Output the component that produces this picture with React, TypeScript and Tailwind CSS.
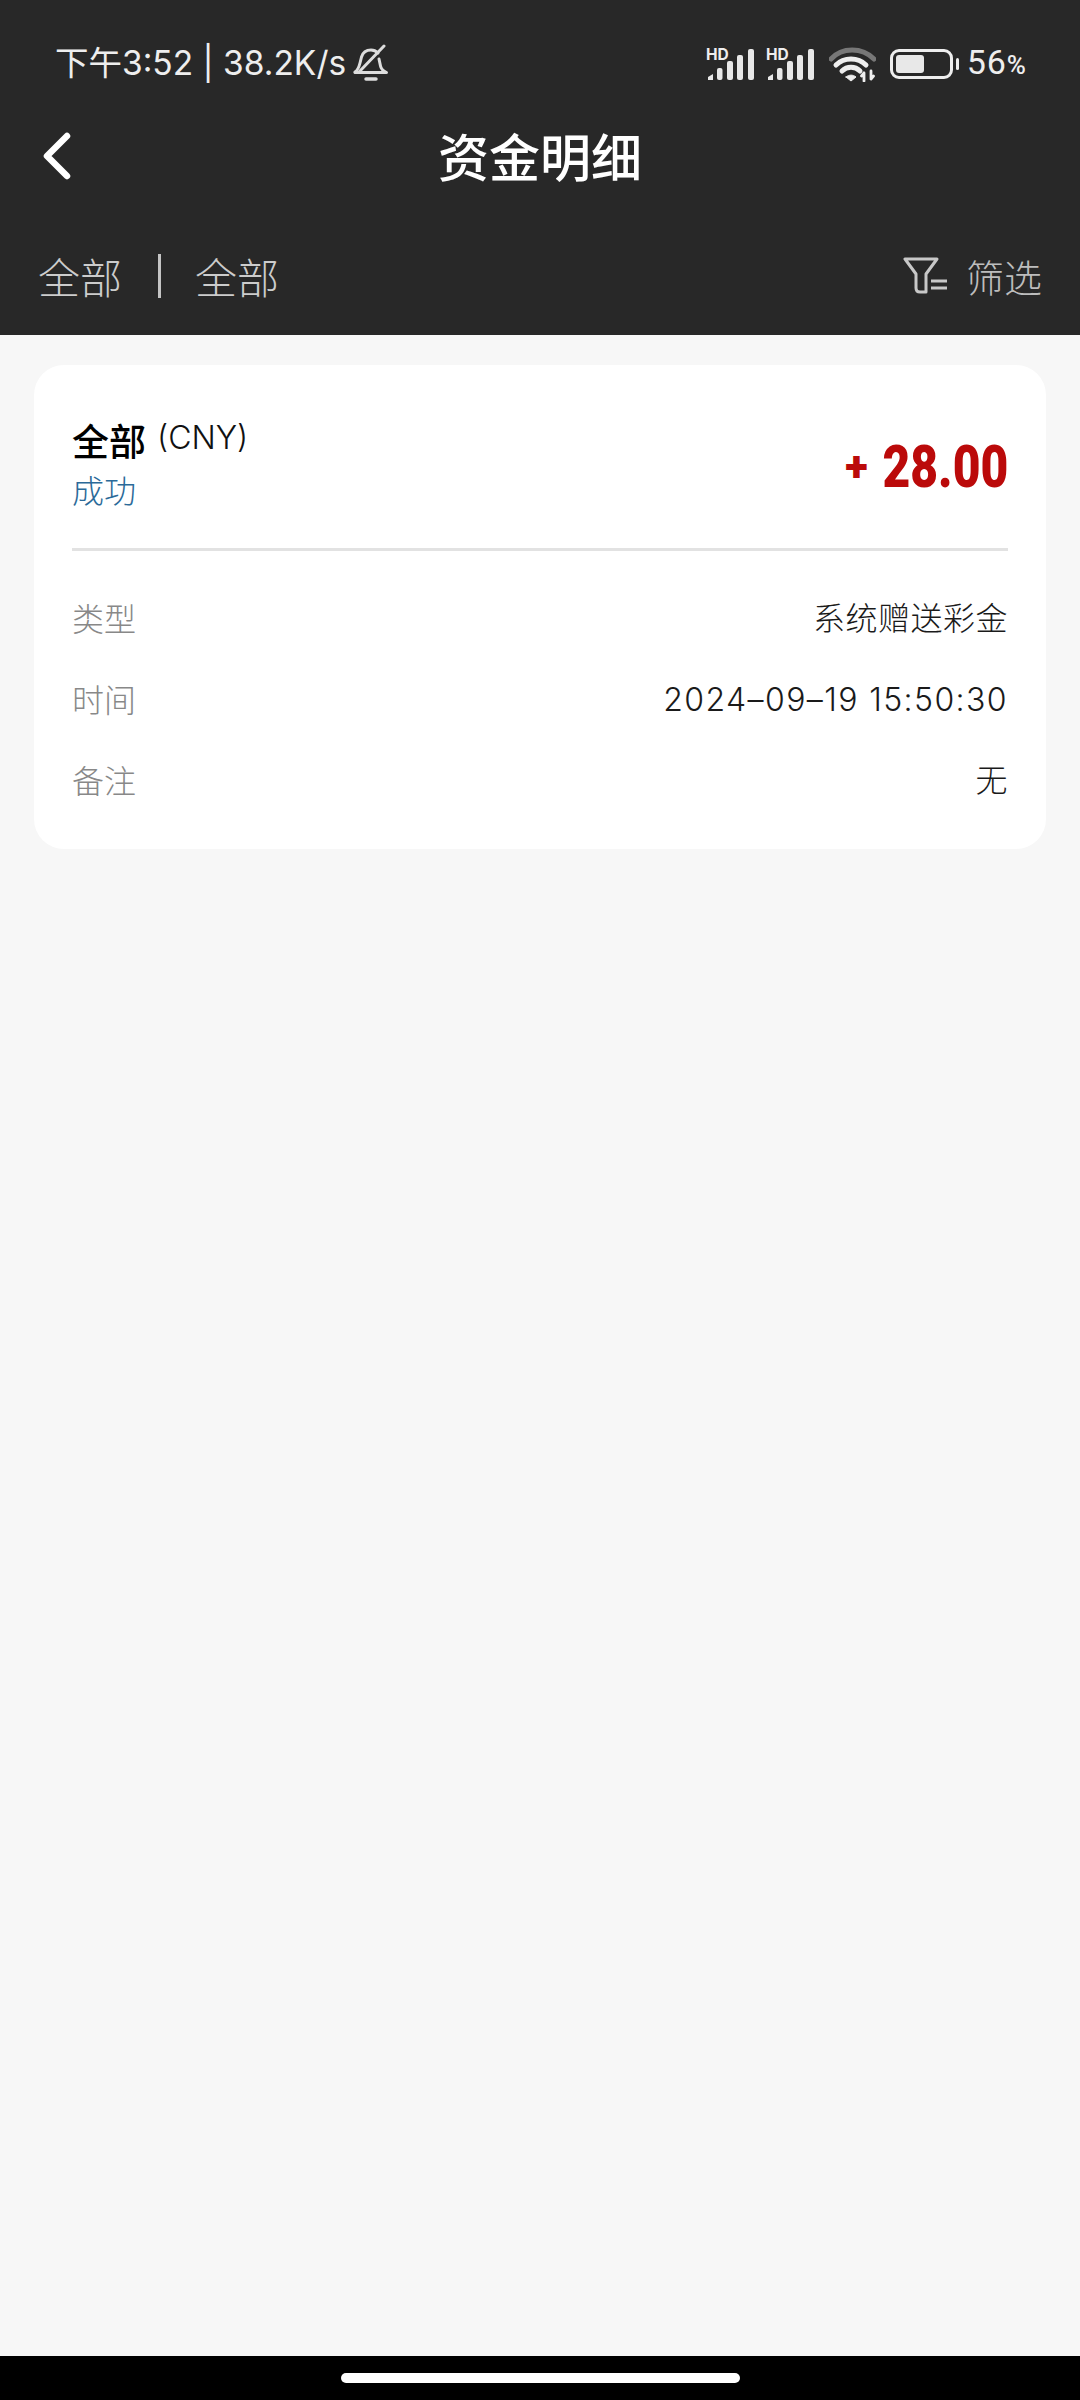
const cjk = "font-['Noto_Sans_CJK_SC','Noto_Sans',sans-serif]";

function Signal() {
    return (
        <svg width="50" height="36" viewBox="0 0 50 36">
            <text x="0" y="13.5" fontSize="15.5" fontWeight="700" fill="#eeeeee" fontFamily="Inter, sans-serif">
                HD
            </text>
            <path d="M2 34v-3l5-3v6z" fill="#e8e8e8" />
            <rect x="11" y="22" width="5.500" height="12" rx="2" fill="#e8e8e8" />
            <rect x="21" y="15" width="6" height="19" rx="2" fill="#e8e8e8" />
            <rect x="31" y="9" width="6" height="25" rx="2" fill="#e8e8e8" />
            <rect x="42" y="3" width="6" height="31" rx="2" fill="#e8e8e8" />
        </svg>
    );
}

function Wifi() {
    return (
        <svg width="47" height="36" viewBox="0 0 47 36" fill="none" strokeLinecap="round">
            <path d="M2 13C13 1 33 1 45 13" stroke="#777777" strokeWidth="5" />
            <path d="M7 19C15 11 29 11 37 19" stroke="#eeeeee" strokeWidth="5" />
            <path d="M13 25C18 20 26 20 31 25" stroke="#eeeeee" strokeWidth="5" />
            <path d="M17 31L22 35L27 31C24 28.500 20 28.500 17 31Z" fill="#eeeeee" stroke="#eeeeee" strokeWidth="1" />
            <path d="M35 27V35M35 27l-2.500 3M42 25V33M42 33l2.500-3" stroke="#eeeeee" strokeWidth="2.800" />
        </svg>
    );
}

function MutedBell() {
    return (
        <svg width="37" height="38" viewBox="0 0 37 38" fill="none" stroke="#dddddd" strokeWidth="3" strokeLinejoin="round" strokeLinecap="round">
            <path d="M3 28c3-2 4-5 5-9l1.500-6C11 8 15 6 19 6c3 0 5 1 7 3" />
            <path d="M27 15l1.500 7c.5 3 3 5 6 6.500H3" />
            <path d="M32 2L7 28" />
            <path d="M14 35h10" strokeWidth="3.500" />
        </svg>
    );
}

function Battery() {
    return (
        <div className="flex items-center gap-[3px]">
            <div className="h-[30px] w-[63px] rounded-[9px] border-[3px] border-[#eeeeee] p-[3px]">
                <div className="h-full w-[28px] rounded-[3px] bg-[#e8e8e8]" />
            </div>
            <div className="h-[12px] w-[3px] rounded-full bg-[#eeeeee]" />
        </div>
    );
}

function StatusBar() {
    return (
        <div className="flex h-[84px] items-end justify-between pb-[1px] pl-[55px] pr-[54px]">
            <div className="flex items-center gap-[6px] font-['Inter','Noto_Sans_CJK_SC',sans-serif] text-[33.5px] leading-[40px] text-[#eeeeee]">
                <span>下午3:52 | 38.2K/s</span>
                <MutedBell />
            </div>
            <div className="mb-[-2px] flex items-center">
                <Signal />
                <div className="ml-[10px]">
                    <Signal />
                </div>
                <div className="ml-[13px]">
                    <Wifi />
                </div>
                <div className="ml-[14px]">
                    <Battery />
                </div>
                <span className="ml-[8px] font-['Roboto',sans-serif] text-[34px] leading-[40px] tracking-[1px] text-[#eeeeee]">
                    56<span className="text-[26px] font-medium tracking-normal">%</span>
                </span>
            </div>
        </div>
    );
}

function NavBar() {
    return (
        <div className="relative mt-[36px] flex h-[72px] items-center justify-center">
            <svg className="absolute left-[40px] top-[11px]" width="32" height="50" viewBox="0 0 32 50" fill="none">
                <path d="M27 5L7 25L27 45" stroke="#ffffff" strokeWidth="6.500" strokeLinecap="round" strokeLinejoin="round" />
            </svg>
            <h1 className={`${cjk} mb-[2px] text-[51px] font-medium leading-[60px] text-white`}>资金明细</h1>
        </div>
    );
}

function FilterBar() {
    return (
        <div className="flex h-[143px] items-center justify-between pl-[38px] pr-[38px] pt-[24px]">
            <div className={`${cjk} flex items-center text-[42px] font-light leading-[50px] text-[#cccccc]`}>
                <span>全部</span>
                <div className="ml-[36px] mr-[34px] h-[44px] w-[3px] bg-[#c4c4c4]" />
                <span>全部</span>
            </div>
            <div className="flex items-center gap-[17px]">
                <svg width="46" height="38" viewBox="0 0 46 38" fill="none" stroke="#c8c8c8" strokeWidth="3" strokeLinejoin="round">
                    <path d="M2 2h32l-11 15v18h-6c-3 0-4-2-4-4V17z" />
                    <path d="M28 24h16M28 31h16" />
                </svg>
                <span className={`${cjk} text-[38px] font-light leading-[46px] text-[#bdbdbd]`}>筛选</span>
            </div>
        </div>
    );
}

function DetailRow({ label, value, wide }: { label: string; value: string; wide?: boolean }) {
    return (
        <div className="flex h-[81px] items-center justify-between">
            <span className={`${cjk} text-[32px] font-light text-[#888888]`}>{label}</span>
            <span className={`mt-[4px] font-['Inter','Noto_Sans_CJK_SC',sans-serif] text-[32px] font-light text-[#1a1a1a] ${wide ? "tracking-[1.4px]" : "tracking-[0.5px]"}`}>
                {value}
            </span>
        </div>
    );
}

export default function App() {
    return (
        <div className="flex h-[2400px] w-[1080px] flex-col overflow-hidden bg-[#f7f7f7]">
            <header className="h-[335px] bg-[#282828]">
                <StatusBar />
                <NavBar />
                <FilterBar />
            </header>
            <main className="flex-1 px-[34px] pt-[30px]">
                <div className="h-[484px] rounded-[30px] bg-white px-[38px]">
                    <div className="flex h-[186px] items-center justify-between border-b-[3px] border-[#e2e2e2] pt-[14px]">
                        <div className="flex flex-col">
                            <div className="flex items-start">
                                <span className={`${cjk} text-[37px] font-medium leading-[48px] text-black`}>全部</span>
                                <span className="ml-[11px] mt-[2px] font-['Inter',sans-serif] text-[32px] font-light leading-[40px] text-[#111111]">(CNY)</span>
                            </div>
                            <span className={`${cjk} mt-[3px] text-[32px] font-light leading-[44px] text-[#2b6a99]`}>成功</span>
                        </div>
                        <div className="mt-[6px] flex items-center font-['Roboto',sans-serif] font-black leading-none text-[#bb0a0a]">
                            <span className="mr-[-17px] text-[42px]">+</span>
                            <span className="origin-right scale-x-[0.8] text-[60px]">28.00</span>
                        </div>
                    </div>
                    <div className="pt-[25px]">
                        <DetailRow label="类型" value="系统赠送彩金" />
                        <DetailRow label="时间" value="2024–09–19 15:50:30" wide />
                        <DetailRow label="备注" value="无" />
                    </div>
                </div>
            </main>
            <footer className="flex h-[44px] justify-center bg-black pt-[17px]">
                <div className="h-[10px] w-[399px] rounded-full bg-white" />
            </footer>
        </div>
    );
}
